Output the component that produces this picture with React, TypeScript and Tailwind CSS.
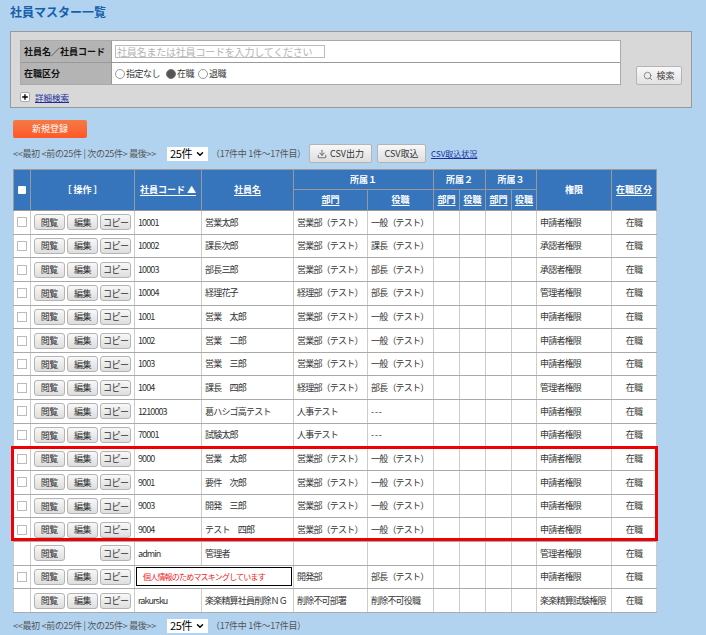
import React from 'react';
import { Search, Download, Plus, ChevronDown } from 'lucide-react';

type Row = {
  code: string;
  name: string;
  dept: string;
  role: string;
  auth: string;
  noCheck?: boolean;
  noEdit?: boolean;
  masked?: boolean;
};

const testDept = '営業部（テスト）';
const rows: Row[] = [
  { code: '10001', name: '営業太郎', dept: testDept, role: '一般（テスト）', auth: '申請者権限' },
  { code: '10002', name: '課長次郎', dept: testDept, role: '課長（テスト）', auth: '承認者権限' },
  { code: '10003', name: '部長三郎', dept: testDept, role: '部長（テスト）', auth: '承認者権限' },
  { code: '10004', name: '経理花子', dept: '経理部（テスト）', role: '部長（テスト）', auth: '管理者権限' },
  { code: '1001', name: '営業　太郎', dept: testDept, role: '一般（テスト）', auth: '申請者権限' },
  { code: '1002', name: '営業　二郎', dept: testDept, role: '一般（テスト）', auth: '申請者権限' },
  { code: '1003', name: '営業　三郎', dept: testDept, role: '一般（テスト）', auth: '申請者権限' },
  { code: '1004', name: '課長　四郎', dept: '経理部（テスト）', role: '部長（テスト）', auth: '管理者権限' },
  { code: '1210003', name: '葛ハシゴ高テスト', dept: '人事テスト', role: '---', auth: '申請者権限' },
  { code: '70001', name: '試験太郎', dept: '人事テスト', role: '---', auth: '申請者権限' },
  { code: '9000', name: '営業　太郎', dept: testDept, role: '一般（テスト）', auth: '申請者権限' },
  { code: '9001', name: '要件　次郎', dept: testDept, role: '一般（テスト）', auth: '申請者権限' },
  { code: '9003', name: '開発　三郎', dept: testDept, role: '一般（テスト）', auth: '申請者権限' },
  { code: '9004', name: 'テスト　四郎', dept: testDept, role: '一般（テスト）', auth: '申請者権限' },
  { code: 'admin', name: '管理者', dept: '', role: '', auth: '管理者権限', noCheck: true, noEdit: true },
  { code: '', name: '', dept: '開発部', role: '部長（テスト）', auth: '申請者権限', masked: true },
  { code: 'rakursku', name: '楽楽精算社員削除ＮＧ', dept: '削除不可部署', role: '削除不可役職', auth: '楽楽精算試験権限', noCheck: true },
];

const RowButton = ({ label }: { label: string }) => (
  <button className="h-[16px] w-[31px] whitespace-nowrap rounded-[3px] border border-[#b4b4b4] bg-gradient-to-b from-[#f8f8f8] to-[#dedede] text-[9px] leading-none tracking-[-0.5px] text-[#333]">
    {label}
  </button>
);

const PageSelect = () => (
  <div className="flex h-[14px] w-[41px] items-center justify-between bg-white pl-[3px] pr-[3px] text-[11px] leading-none text-black">
    <span>25件</span>
    <ChevronDown className="h-[10px] w-[10px]" strokeWidth={3.5} />
  </div>
);

const Pager = () => (
  <div className="flex items-center text-[9px] tracking-[-0.3px] text-[#555]">
    <span className="w-[154px] whitespace-nowrap">{'<<最初 <前の25件 | 次の25件> 最後>>'}</span>
    <PageSelect />
    <span className="ml-[3px] w-[98px] whitespace-nowrap">（17件中 1件～17件目）</span>
  </div>
);

const headCell = 'border border-[#999] bg-[#3674bc] text-[9px] font-bold text-white';
const headLink = 'underline underline-offset-2';
const bodyCell = 'border-x border-x-[#ccc] border-y border-y-[#aaa] bg-white text-[9px] tracking-[-0.8px] text-[#333] px-[3px] whitespace-nowrap overflow-hidden';

export default function App() {
  return (
    <div className="h-[635px] w-[706px] overflow-hidden bg-[#b1d3f0] font-['Noto_Sans_CJK_JP','Liberation_Sans',sans-serif]">
      <h1 className="pl-[10px] pt-[2px] text-[12px] font-bold leading-[20px] text-[#1660ab]">社員マスター一覧</h1>

      <div className="ml-[10px] mt-[9px] h-[77px] w-[682px] border border-[#999] bg-[#d8d8d8] pl-[9px] pt-[8px]">
        <div className="flex items-end">
          <div className="w-[601px] border border-[#aaa] bg-white">
            <div className="flex h-[22px] border-b border-[#999]">
              <div className="flex w-[91px] items-center whitespace-nowrap border-r border-[#999] bg-[#b4b4b4] pl-[3px] text-[9px] font-bold text-[#111]">社員名／社員コード</div>
              <div className="flex items-center pl-[3px]">
                <div className="flex h-[13px] w-[210px] items-center whitespace-nowrap border border-[#bbb] bg-white pl-[1px] text-[10px] tracking-[-0.2px] text-[#b4b4b4]">社員名または社員コードを入力してください</div>
              </div>
            </div>
            <div className="flex h-[21px]">
              <div className="flex w-[91px] items-center border-r border-[#999] bg-[#b4b4b4] pl-[3px] text-[9px] font-bold text-[#111]">在職区分</div>
              <div className="flex items-center pl-[3px] text-[9px] tracking-[-0.5px] text-[#333]">
                <span className="h-[10px] w-[10px] rounded-full border border-[#999] bg-white" />
                <span className="ml-[1px] mr-[6px]">指定なし</span>
                <span className="h-[10px] w-[10px] rounded-full border border-[#777] bg-[#555]" />
                <span className="ml-[1px] mr-[4px]">在職</span>
                <span className="h-[10px] w-[10px] rounded-full border border-[#999] bg-white" />
                <span className="ml-[1px]">退職</span>
              </div>
            </div>
          </div>
          <button className="ml-[15px] flex h-[19px] w-[46px] items-center justify-center gap-[3px] rounded-[2px] border border-[#b4b4b4] bg-gradient-to-b from-[#f8f8f8] to-[#e2e2e2] text-[9px] text-[#444]">
            <Search className="h-[10px] w-[10px] text-[#777]" strokeWidth={2} />
            検索
          </button>
        </div>
        <div className="mt-[7px] flex items-center">
          <span className="flex h-[10px] w-[10px] items-center justify-center rounded-[2px] border border-[#aaa] bg-white">
            <Plus className="h-[8px] w-[8px] text-black" strokeWidth={4} />
          </span>
          <a className="ml-[5px] text-[8.5px] leading-none text-[#1a2f9c] underline">詳細検索</a>
        </div>
      </div>

      <button className="ml-[13px] mt-[12px] block h-[18px] w-[74px] rounded-[2px] bg-gradient-to-b from-[#f47a46] to-[#ff5726] text-[9px] text-white">新規登録</button>

      <div className="ml-[13px] mt-[5px] flex h-[21px] items-center">
        <Pager />
        <button className="flex h-[19px] w-[63px] items-center justify-center gap-[3px] rounded-[2px] border border-[#b4b4b4] bg-gradient-to-b from-[#f8f8f8] to-[#dedede] text-[9px] text-[#333]">
          <Download className="h-[10px] w-[10px] text-[#777]" strokeWidth={2.5} />
          CSV出力
        </button>
        <button className="ml-[5px] h-[19px] w-[49px] rounded-[2px] border border-[#b4b4b4] bg-gradient-to-b from-[#f8f8f8] to-[#dedede] text-[9px] text-[#333]">CSV取込</button>
        <a className="ml-[5px] whitespace-nowrap text-[8px] text-[#1a2f9c] underline">CSV取込状況</a>
      </div>

      <div className="relative ml-[13px] mt-[5px] w-[643px]">
        <table className="w-[643px] table-fixed border-collapse">
          <colgroup>
            <col className="w-[17px]" />
            <col className="w-[104px]" />
            <col className="w-[67px]" />
            <col className="w-[92px]" />
            <col className="w-[74px]" />
            <col className="w-[66px]" />
            <col className="w-[26px]" />
            <col className="w-[26px]" />
            <col className="w-[26px]" />
            <col className="w-[25px]" />
            <col className="w-[75px]" />
            <col className="w-[45px]" />
          </colgroup>
          <thead>
            <tr className="h-[20px]">
              <th rowSpan={2} className={headCell}>
                <span className="mx-auto block h-[8px] w-[8px] rounded-[1px] bg-white" />
              </th>
              <th rowSpan={2} className={headCell}>［&nbsp;操作&nbsp;］</th>
              <th rowSpan={2} className={headCell}><span className={headLink}>社員コード ▲</span></th>
              <th rowSpan={2} className={headCell}><span className={headLink}>社員名</span></th>
              <th colSpan={2} className={headCell}>所属１</th>
              <th colSpan={2} className={headCell}>所属２</th>
              <th colSpan={2} className={headCell}>所属３</th>
              <th rowSpan={2} className={headCell}>権限</th>
              <th rowSpan={2} className={headCell}><span className={headLink}>在職区分</span></th>
            </tr>
            <tr className="h-[21px]">
              <th className={headCell}><span className={headLink}>部門</span></th>
              <th className={headCell}><span className={headLink}>役職</span></th>
              <th className={headCell}><span className={headLink}>部門</span></th>
              <th className={headCell}><span className={headLink}>役職</span></th>
              <th className={headCell}><span className={headLink}>部門</span></th>
              <th className={headCell}><span className={headLink}>役職</span></th>
            </tr>
          </thead>
          <tbody>
            {rows.map((row, i) => (
              <tr key={i} className="h-[23.65px]">
                <td className={bodyCell}>
                  {!row.noCheck && <span className="mx-auto block h-[10px] w-[10px] border border-[#bbb] bg-white" />}
                </td>
                <td className={bodyCell}>
                  <div className="flex gap-[2.5px]">
                    <RowButton label="閲覧" />
                    {row.noEdit ? <span className="w-[31px]" /> : <RowButton label="編集" />}
                    <RowButton label="コピー" />
                  </div>
                </td>
                {row.masked ? (
                  <td colSpan={2} className={`${bodyCell} !px-[1px]`}>
                    <div className="flex h-[19px] items-center border border-black pl-[6px] text-[8px] text-[#f02020]">個人情報のためマスキングしています</div>
                  </td>
                ) : (
                  <>
                    <td className={`${bodyCell} !tracking-[-0.9px]`}>{row.code}</td>
                    <td className={bodyCell}>{row.name}</td>
                  </>
                )}
                <td className={bodyCell}>{row.dept}</td>
                <td className={`${bodyCell} ${row.role === '---' ? '!tracking-[0.8px]' : ''}`}>{row.role}</td>
                <td className={bodyCell} />
                <td className={bodyCell} />
                <td className={bodyCell} />
                <td className={bodyCell} />
                <td className={bodyCell}>{row.auth}</td>
                <td className={`${bodyCell} text-center`}>在職</td>
              </tr>
            ))}
          </tbody>
        </table>
        {/* red highlight over rows 9000-9004 */}
        <div className="pointer-events-none absolute left-[-2px] top-[277px] h-[95px] w-[647px] border-[3px] border-[#f00000]" />
      </div>

      <div className="ml-[13px] mt-[6px]">
        <Pager />
      </div>
    </div>
  );
}
